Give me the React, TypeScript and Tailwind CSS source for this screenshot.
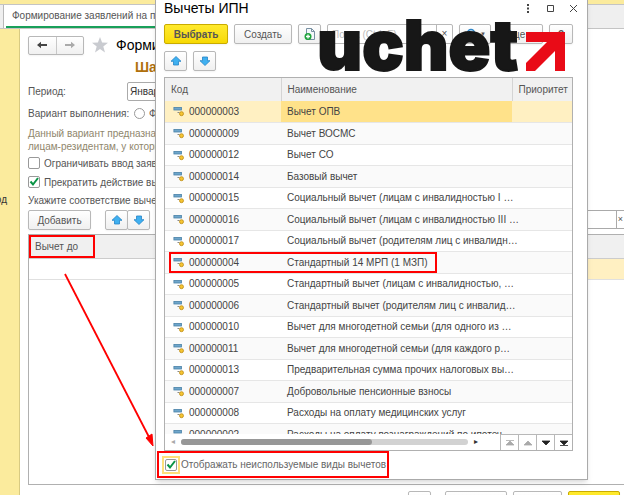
import type { ReactNode } from "react";
import clsx from "clsx";

type Deduction = {
  code: string;
  name: string;
};

const deductions: Deduction[] = [
  { code: "000000003", name: "Вычет ОПВ" },
  { code: "000000009", name: "Вычет ВОСМС" },
  { code: "000000012", name: "Вычет СО" },
  { code: "000000014", name: "Базовый вычет" },
  { code: "000000015", name: "Социальный вычет (лицам с инвалидностью I …" },
  { code: "000000016", name: "Социальный вычет (лицам с инвалидностью III …" },
  { code: "000000017", name: "Социальный вычет (родителям лиц с инвалидн…" },
  { code: "000000004", name: "Стандартный 14 МРП (1 МЗП)" },
  { code: "000000005", name: "Стандартный вычет (лицам с инвалидностью, …" },
  { code: "000000006", name: "Стандартный вычет (родителям лиц с инвалид…" },
  { code: "000000010", name: "Вычет для многодетной семьи (для одного из …" },
  { code: "000000011", name: "Вычет для многодетной семьи (для каждого р…" },
  { code: "000000013", name: "Предварительная сумма прочих налоговых вы…" },
  { code: "000000007", name: "Добровольные пенсионные взносы" },
  { code: "000000008", name: "Расходы на оплату медицинских услуг" },
  { code: "000000002", name: "Расходы на оплату вознаграждений по ипотеч…" },
];

const SELECTED = "000000003";
const MARKED = "000000004";

type ButtonProps = {
  children?: ReactNode;
  label?: string;
  className?: string;
  primary?: boolean;
};

const Button = ({ children, label, className, primary }: ButtonProps) => (
  <button
    type="button"
    aria-label={label}
    className={clsx(
      "flex h-5 shrink-0 items-center justify-center rounded-xs border shadow-xs",
      primary
        ? "border-[#c9ab00] bg-linear-to-b from-[#ffea2c] to-[#f7d900] font-bold"
        : "border-[#b8b8b8] bg-linear-to-b from-white to-[#f0f0f0]",
      className,
    )}
  >
    {children}
  </button>
);

const BlueArrow = ({ down }: { down?: boolean }) => (
  <svg
    viewBox="0 0 12 12"
    className={clsx("size-3", down && "rotate-180")}
    aria-hidden="true"
  >
    <path
      d="M6 1.5 11 6.3H8.5V10H3.5V6.3H1Z"
      fill="#3fb0f0"
      stroke="#2484c6"
      strokeWidth=".8"
      strokeLinejoin="round"
    />
  </svg>
);

const NavArrow = ({ right }: { right?: boolean }) => (
  <svg
    viewBox="0 0 12 8"
    className={clsx("h-2 w-3", right ? "rotate-180 text-[#aaa]" : "text-[#444]")}
    aria-hidden="true"
  >
    <path d="M1 4 5 .8V3h6v2H5v2.2Z" fill="currentColor" />
  </svg>
);

const ItemIcon = () => (
  <svg viewBox="0 0 12 12" className="size-3" aria-hidden="true">
    <rect x=".9" y="2.4" width="7.6" height="2.6" fill="#6fa6cb" stroke="#4a82a8" strokeWidth=".8" />
    <path d="M4.5 7.5H6.5" stroke="#888" />
    <circle cx="8.5" cy="8.7" r="2" fill="#f5c431" stroke="#bd8a12" strokeWidth=".8" />
  </svg>
);

const CheckBox = ({ id, checked }: { id: string; checked?: boolean }) => (
  <span className="relative block size-3 shrink-0">
    <input
      id={id}
      type="checkbox"
      defaultChecked={checked}
      className="peer block size-3 appearance-none rounded-xs border border-[#999] bg-white"
    />
    <svg
      viewBox="0 0 12 12"
      className="pointer-events-none absolute inset-0 hidden size-3 peer-checked:block"
      aria-hidden="true"
    >
      <path d="M2.5 5.5 5 8.5 10 2" fill="none" stroke="#0a9446" strokeWidth="2" />
    </svg>
  </span>
);

const pagers = [
  { label: "В начало", d: "M3 3.5h8M7 4 11 8H3Z", off: true },
  { label: "Вверх", d: "M7 4 11 8H3Z", off: true },
  { label: "Вниз", d: "M3 4h8L7 8Z", off: false },
  { label: "В конец", d: "M3 4h8L7 8ZM3 8.5h8", off: false },
];

const DeductionsTable = () => (
  <div className="flex flex-col border border-[#b0b0b0]">
    <div className="h-[356px] overflow-hidden">
      <table className="w-full table-fixed border-collapse whitespace-nowrap text-left">
        <colgroup>
          <col className="w-[116px]" />
          <col />
          <col className="w-[60px]" />
        </colgroup>
        <thead>
          <tr className="h-[23px] bg-[#f1f1f1] text-[#555]">
            <th className="p-0 pl-1.5 font-normal">Код</th>
            <th className="border-l border-[#d4d4d4] p-0 pl-1.5 font-normal">
              Наименование
            </th>
            <th className="border-l border-[#d4d4d4] p-0 pl-1.5 font-normal">
              Приоритет
            </th>
          </tr>
        </thead>
        <tbody className="text-[#444]">
          {deductions.map(({ code, name }) => (
            <tr
              key={code}
              className={clsx(
                "border-b border-[#e6e6e6] odd:h-[21px] even:h-[22px]",
                code === SELECTED ? "bg-[#fff0c2]" : "even:bg-[#fafafa]",
              )}
            >
              <td className="relative p-0">
                <div className="flex items-center gap-1 pl-2">
                  <ItemIcon />
                  {code}
                </div>
                {code === MARKED && (
                  <span className="pointer-events-none absolute inset-y-0 left-1 z-10 w-[268px] border-2 border-[#f00]" />
                )}
              </td>
              <td
                className={clsx(
                  "p-0 pl-1.5",
                  code === SELECTED && "bg-[#ffe28a]",
                )}
              >
                {name}
              </td>
              <td className="p-0" />
            </tr>
          ))}
        </tbody>
      </table>
    </div>
    <div className="flex h-4 items-center">
      <span className="w-4 pl-1.5 text-[8px] text-[#aaa]">◂</span>
      <div className="h-1.5 flex-1 rounded-full bg-[#d2d2d2]">
        <div className="h-1.5 w-2/3 rounded-full bg-[#979797]" />
      </div>
      <span className="w-8 pl-1.5 text-[8px] text-[#333]">▸</span>
      {pagers.map(({ label, d, off }) => (
        <button
          key={label}
          type="button"
          aria-label={label}
          className={clsx(
            "flex h-4 w-[18px] items-center justify-center border-t border-l border-[#b8b8b8]",
            off ? "text-[#aaa]" : "text-[#222]",
          )}
        >
          <svg viewBox="0 0 14 12" className="h-3 w-3.5" aria-hidden="true">
            <path d={d} fill="currentColor" stroke="currentColor" strokeWidth=".8" />
          </svg>
        </button>
      ))}
    </div>
  </div>
);

const DeductionsDialog = () => (
  <section
    role="dialog"
    aria-labelledby="dialog-title"
    className="absolute top-0 right-9 left-[155px] border border-t-0 border-[#aaa] bg-white shadow-md"
  >
    <div className="px-2 pr-3.5">
      <header className="-mr-1.5 flex h-4 items-center">
        <h2 id="dialog-title" className="flex-1 text-sm leading-4 text-black">
          Вычеты ИПН
        </h2>
        <div className="flex items-center gap-3 text-[#444]">
          <button type="button" aria-label="Меню">
            <svg viewBox="0 0 11 11" className="h-[11px] w-[11px]">
              <path d="M5 1h2v2H5zM5 4.5h2v2H5zM5 8h2v2H5z" fill="currentColor" />
            </svg>
          </button>
          <button type="button" aria-label="Развернуть">
            <svg viewBox="0 0 11 11" className="h-[11px] w-[11px]">
              <path d="M2.5 2.5h6v6h-6z" fill="none" stroke="currentColor" />
            </svg>
          </button>
          <button type="button" aria-label="Закрыть">
            <svg viewBox="0 0 11 11" className="h-[11px] w-[11px]">
              <path d="m2 2 7 7M9 2 2 9" stroke="currentColor" />
            </svg>
          </button>
        </div>
      </header>

      <div className="mt-2 flex gap-1.5">
        <Button primary className="w-16">
          Выбрать
        </Button>
        <Button className="w-[58px]">Создать</Button>
        <Button label="Скопировать" className="w-[23px]">
          <svg viewBox="0 0 14 14" className="size-3.5" aria-hidden="true">
            <path d="M3.5 1.5h5l3 3v8h-8z" fill="#f4f8fb" stroke="#7890a2" />
            <path d="M8.5 1.5v3h3" fill="none" stroke="#7890a2" />
            <circle cx="5" cy="9.5" r="3.5" fill="#1fa33c" />
            <path d="M5 7.5v4M3 9.5h4" stroke="#fff" strokeWidth="1.3" />
          </svg>
        </Button>
        <div className="flex h-5 min-w-0 flex-1 rounded-xs border border-[#b8b8b8]">
          <input
            aria-label="Поиск"
            placeholder="Поиск (Ctrl+F)"
            className="min-w-0 flex-1 px-1 placeholder:text-[#bbb]"
          />
          <button type="button" className="w-4 border-l border-[#b8b8b8] leading-3">
            ×
          </button>
        </div>
        <Button label="Найти" className="w-8 gap-1">
          <svg viewBox="0 0 12 12" className="size-3" aria-hidden="true">
            <circle cx="7" cy="5" r="3.5" fill="#d9efff" stroke="#2e86c9" strokeWidth="1.5" />
            <path d="m4.5 7.5-3 3" stroke="#2e86c9" strokeWidth="2" />
          </svg>
          <span className="text-[6px]">▼</span>
        </Button>
        <Button className="w-[46px] gap-1">
          Еще <span className="text-[6px]">▼</span>
        </Button>
        <Button className="w-6 font-bold">?</Button>
      </div>

      <div className="mt-[7px] mb-1.5 flex gap-1.5">
        <Button label="Переместить вверх" className="w-[23px]">
          <BlueArrow />
        </Button>
        <Button label="Переместить вниз" className="w-[23px]">
          <BlueArrow down />
        </Button>
      </div>

      <DeductionsTable />
    </div>

    <div className="mb-px ml-px flex h-[27px] w-[232px] items-center gap-px border-2 border-[#f00] pl-[3px]">
      <span className="border-2 border-[#ffe07a] p-px">
        <CheckBox id="show-unused" checked />
      </span>
      <label htmlFor="show-unused" className="whitespace-nowrap text-[#666]">
        Отображать неиспользуемые виды вычетов
      </label>
    </div>
  </section>
);

const Logo = () => (
  <div className="pointer-events-none absolute top-0 right-[59px] flex items-end gap-2">
    <span className="font-['Inter',sans-serif] text-[69px] leading-[90px] font-black text-[#171717] [-webkit-text-stroke:2px_#171717]">
      uchet
    </span>
    <svg viewBox="0 0 39 39" className="mb-[19px] h-[39px] w-[39px]" aria-hidden="true">
      <path d="M0 0h39v39H29V19L9 39H0V31L21 10H0Z" fill="#e90b17" />
    </svg>
  </div>
);

const Workspace = () => (
  <main className="flex min-w-0 flex-1 flex-col border-l border-[#d8ca82] bg-white pl-2 whitespace-nowrap">
    <div className="mt-1.5 flex h-5 shrink-0 items-center">
      <div className="flex h-[19px] w-14 rounded-xs border border-[#b8b8b8] bg-linear-to-b from-white to-[#f0f0f0] shadow-xs">
        <button type="button" aria-label="Назад" className="flex flex-1 items-center justify-center">
          <NavArrow />
        </button>
        <button
          type="button"
          aria-label="Вперед"
          className="flex flex-1 items-center justify-center border-l border-[#c8c8c8]"
        >
          <NavArrow right />
        </button>
      </div>
      <svg viewBox="0 0 16 16" className="ml-2 size-4" aria-hidden="true">
        <path d="m8 0 2.1 5.6 5.9.2-4.7 3.7L13 15.5 8 12.1 3 15.5l1.7-6L0 5.8l5.9-.2Z" fill="#c9cbd0" />
      </svg>
      <h1 className="ml-2 text-sm text-black">Формирование заявлений</h1>
    </div>
    <h2 className="mt-0.5 ml-[107px] h-5 shrink-0 text-sm leading-5 font-bold text-[#b0700c]">
      Шаг 1
    </h2>
    <div className="mt-1 flex h-5 shrink-0 items-center">
      <label htmlFor="period" className="w-[99px]">
        Период:
      </label>
      <input
        id="period"
        defaultValue="Январь"
        className="h-[19px] w-40 rounded-xs border border-[#aaa] px-0.5 text-[#333]"
      />
    </div>
    <div className="mt-0.5 flex h-5 shrink-0 items-center">
      <span className="w-[106px]">Вариант выполнения:</span>
      <input
        id="variant"
        type="radio"
        className="size-[11px] appearance-none rounded-full border border-[#999]"
      />
      <label htmlFor="variant" className="ml-1">
        Формировать
      </label>
    </div>
    <p className="mt-1 shrink-0 leading-[13px] text-[#8f866c]">
      Данный вариант предназначен
      <br />
      лицам-резидентам, у которых
    </p>
    <div className="flex h-5 shrink-0 items-center gap-1">
      <CheckBox id="limit" />
      <label htmlFor="limit">Ограничивать ввод заявлений</label>
    </div>
    <div className="flex h-[18px] shrink-0 items-center gap-1">
      <CheckBox id="stop" checked />
      <label htmlFor="stop">Прекратить действие вычетов</label>
    </div>
    <p className="h-[19px] shrink-0 leading-5">Укажите соответствие вычетов</p>
    <div className="flex h-6 shrink-0 items-start">
      <Button className="w-[63px]">Добавить</Button>
      <Button label="Вверх" className="ml-3.5 w-[23px]">
        <BlueArrow />
      </Button>
      <Button label="Вниз" className="-ml-px w-[23px]">
        <BlueArrow down />
      </Button>
      <div className="ml-auto flex h-[19px] w-36 border border-r-0 border-[#aaa]">
        <input aria-label="Поиск по таблице" className="min-w-0 flex-1" />
        <button type="button" className="w-2 border-l border-[#aaa] text-[9px]">
          ×
        </button>
      </div>
    </div>
    <div className="min-h-0 flex-1 border border-r-0 border-[#b0b0b0]">
      <table className="w-full border-collapse text-left">
        <thead>
          <tr className="h-[23px] border-b border-[#ccc] bg-[#f0f0f0]">
            <th className="p-0 font-normal">
              <span className="flex h-[23px] w-[66px] items-center border-2 border-[#f00] pl-1">
                Вычет до
              </span>
            </th>
            <th className="p-0" />
          </tr>
        </thead>
        <tbody>
          <tr className="h-[21px] border-b border-[#e0e0e0]">
            <td className="p-0" />
            <td className="w-36 bg-[#fff0c2] p-0" />
          </tr>
        </tbody>
      </table>
    </div>
    <footer className="flex h-[10px] shrink-0 justify-end gap-1.5 overflow-hidden pt-1.5 pr-1">
      <Button label="Справка" className="mr-2 w-[23px]" />
      <Button label="Назад" className="w-[62px]" />
      <Button label="Далее" className="w-[49px]" />
      <Button label="Готово" primary className="w-[52px]" />
    </footer>
  </main>
);

export default function App() {
  return (
    <div className="relative flex h-screen flex-col overflow-hidden bg-[#fbeb9d] font-['Liberation_Sans',Arial,sans-serif] text-[10px] text-[#555]">
      <nav className="mt-1 flex h-[25px] shrink-0 border-y border-[#c4c4c4] bg-[#efefef]">
        <a
          href="#form"
          className="ml-[3px] flex w-72 items-center border-l border-[#b8b8b8] bg-white pl-0.5 whitespace-nowrap"
        >
          <span className="flex h-full flex-1 items-center border-b-2 border-[#19a05a] pl-1.5">
            Формирование заявлений на предоставление
          </span>
        </a>
      </nav>
      <div className="flex min-h-0 flex-1">
        <aside className="flex w-[19px] shrink-0 justify-end overflow-hidden pt-[163px] pr-3 text-[#333]">
          од
        </aside>
        <Workspace />
      </div>

      <DeductionsDialog />
      <Logo />

      <svg
        viewBox="0 0 90 175"
        className="pointer-events-none absolute top-[273px] left-16 h-[175px] w-[90px]"
        aria-hidden="true"
      >
        <path d="M1 1 86 166" stroke="#f00" strokeWidth="1.8" />
        <path d="m89 173-7-8 6-4Z" fill="#f00" stroke="#f00" />
      </svg>
    </div>
  );
}
